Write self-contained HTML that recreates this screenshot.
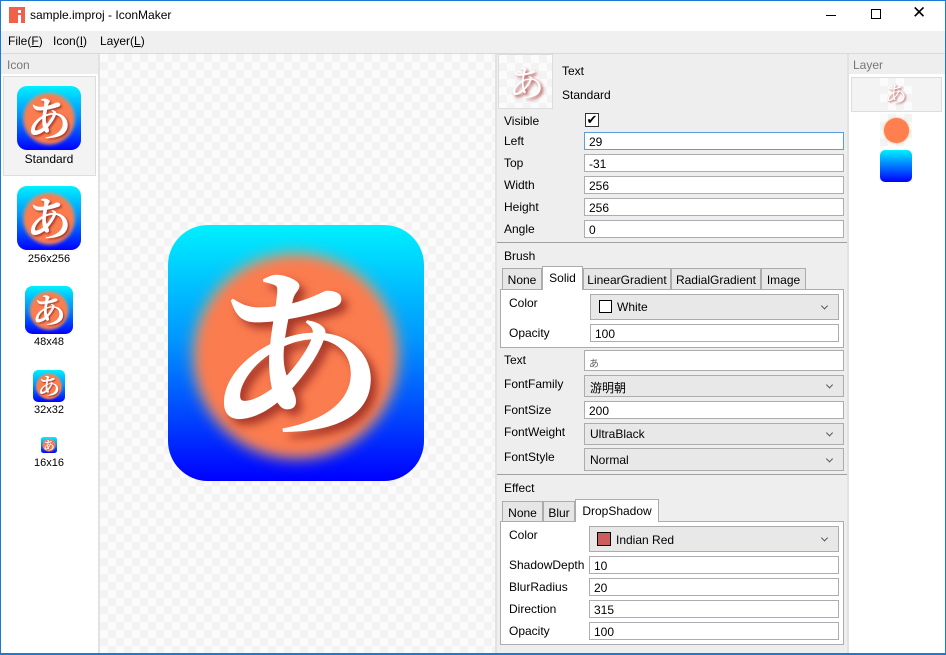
<!DOCTYPE html>
<html><head><meta charset="utf-8"><style>
*{box-sizing:border-box;margin:0;padding:0}
body{width:946px;height:655px;overflow:hidden;background:#f0f0f0;font-family:"Liberation Sans","Noto Sans CJK JP",sans-serif;font-size:12px;color:#000;position:relative}
.a{position:absolute}
.win{left:0;top:0;width:946px;height:655px;border:1px solid #1a7ad4;pointer-events:none;z-index:10}
.inp{position:absolute;background:#fff;border:1px solid #abadb3;padding:2px 0 0 4px;font-size:12px;height:18px}
.cb{position:absolute;background:#e8e8e8;border:1px solid #acacac;padding:3px 0 0 5px;font-size:12px}
.cb:after{content:"";position:absolute;right:11px;top:50%;width:4px;height:4px;border-right:1px solid #555;border-bottom:1px solid #555;transform:translateY(-70%) rotate(45deg)}
.lbl{position:absolute;font-size:12px}
.tab{position:absolute;background:#e6e6e6;border:1px solid #acacac;font-size:12px;text-align:center;padding-top:4px}
.tab.sel{background:#fff;border-bottom:none;z-index:2}
.chk{background-image:linear-gradient(45deg,#f3f3f3 25%,transparent 25%,transparent 75%,#f3f3f3 75%),linear-gradient(45deg,#f3f3f3 25%,transparent 25%,transparent 75%,#f3f3f3 75%);background-size:16px 16px;background-position:0 0,8px 8px;background-color:#fbfbfb}
.ic{position:absolute;width:256px;height:256px;transform-origin:0 0;border-radius:40px;background:linear-gradient(#00f0ff,#0096ff 45%,#0000ff);overflow:hidden}
.ic .c{position:absolute;left:30px;top:33px;width:196px;height:196px;border-radius:50%;background:#fb7c4f;box-shadow:0 0 10px 6px rgba(240,150,90,.8);filter:blur(5px)}
.ic .t{position:absolute;left:0;top:-8px;width:256px;text-align:center;font-family:"Noto Serif CJK JP","Noto Serif CJK SC",serif;font-weight:700;font-size:182px;line-height:256px;color:#fff;text-shadow:6px 6px 9px #a8382a}
</style></head><body>
<div class="a win"></div>
<div class="a" style="left:0;top:0;width:946px;height:31px;background:#fff"></div>
<div class="a" style="left:9px;top:7px;width:16px;height:16px;background:#f0604a"></div>
<div class="a" style="left:18px;top:10px;width:3px;height:3px;background:#fff"></div>
<div class="a" style="left:18px;top:15px;width:3px;height:8px;background:#fff"></div>
<div class="a" style="left:30px;top:8px;font-size:12px">sample.improj - IconMaker</div>
<div class="a" style="left:826px;top:15px;width:10px;height:1px;background:#000"></div>
<div class="a" style="left:871px;top:9px;width:10px;height:10px;border:1px solid #000"></div>
<div class="a" style="left:912px;top:3px;font-size:17px;line-height:20px">✕</div>
<div class="a" style="left:8px;top:34px">File(<u>F</u>)</div>
<div class="a" style="left:53px;top:34px">Icon(<u>I</u>)</div>
<div class="a" style="left:100px;top:34px">Layer(<u>L</u>)</div>
<div class="a" style="left:0;top:53px;width:946px;height:1px;background:#d9d9d9"></div>
<div class="a" style="left:1px;top:54px;width:97px;height:600px;background:#fff"></div>
<div class="a" style="left:1px;top:54px;width:97px;height:20px;background:#eeeeee;color:#777;padding:4px 0 0 6px">Icon</div>
<div class="a" style="left:98px;top:54px;width:2px;height:600px;background:#e2e2e2"></div>
<div class="a" style="left:3px;top:76px;width:93px;height:100px;background:#f3f3f3;border:1px solid #ddd"></div>
<div class="ic" style="left:17px;top:86px;transform:scale(.25)"><div class="c"></div><div class="t">あ</div></div>
<div class="a" style="left:0;top:152px;width:98px;text-align:center">Standard</div>
<div class="ic" style="left:17px;top:186px;transform:scale(.25)"><div class="c"></div><div class="t">あ</div></div>
<div class="a" style="left:0;top:253px;width:98px;text-align:center;font-size:11px">256x256</div>
<div class="ic" style="left:25px;top:286px;transform:scale(.1875)"><div class="c"></div><div class="t">あ</div></div>
<div class="a" style="left:0;top:336px;width:98px;text-align:center;font-size:11px">48x48</div>
<div class="ic" style="left:33px;top:370px;transform:scale(.125)"><div class="c"></div><div class="t">あ</div></div>
<div class="a" style="left:0;top:404px;width:98px;text-align:center;font-size:11px">32x32</div>
<div class="ic" style="left:41px;top:437px;transform:scale(.0625)"><div class="c"></div><div class="t">あ</div></div>
<div class="a" style="left:0;top:457px;width:98px;text-align:center;font-size:11px">16x16</div>
<div class="a chk" style="left:100px;top:54px;width:395px;height:600px"></div>
<div class="ic" style="left:168px;top:225px"><div class="c"></div><div class="t">あ</div></div>
<div class="a" style="left:495px;top:54px;width:2px;height:600px;background:#e2e2e2"></div>
<div class="a" style="left:497px;top:54px;width:350px;height:600px;background:#eeeeee"></div>
<div class="a chk" style="left:498px;top:54px;width:55px;height:55px;border:1px solid #ddd;overflow:hidden"><div style="position:absolute;left:0;top:2px;width:55px;text-align:center;font-family:'Noto Serif CJK JP',serif;font-size:36px;line-height:50px;color:#fff;text-shadow:2px 2px 3px #b04040">あ</div></div>
<div class="lbl" style="left:562px;top:64px">Text</div>
<div class="lbl" style="left:562px;top:88px">Standard</div>
<div class="lbl" style="left:504px;top:114px">Visible</div>
<div class="a" style="left:585px;top:113px;width:14px;height:14px;border:1px solid #333;background:#fff;font-size:13px;line-height:12px;text-align:center">✔</div>
<div class="lbl" style="left:504px;top:134px">Left</div>
<div class="inp" style="left:584px;top:132px;width:260px;border-color:#5a9ee0">29</div>
<div class="lbl" style="left:504px;top:156px">Top</div>
<div class="inp" style="left:584px;top:154px;width:260px">-31</div>
<div class="lbl" style="left:504px;top:178px">Width</div>
<div class="inp" style="left:584px;top:176px;width:260px">256</div>
<div class="lbl" style="left:504px;top:200px">Height</div>
<div class="inp" style="left:584px;top:198px;width:260px">256</div>
<div class="lbl" style="left:504px;top:222px">Angle</div>
<div class="inp" style="left:584px;top:220px;width:260px">0</div>
<div class="a" style="left:497px;top:242px;width:350px;height:1px;background:#a0a0a0"></div>
<div class="lbl" style="left:504px;top:249px">Brush</div>
<div class="tab" style="left:502px;top:268px;width:40px;height:22px">None</div>
<div class="tab sel" style="left:542px;top:266px;width:41px;height:24px">Solid</div>
<div class="tab" style="left:583px;top:268px;width:88px;height:22px">LinearGradient</div>
<div class="tab" style="left:671px;top:268px;width:90px;height:22px">RadialGradient</div>
<div class="tab" style="left:761px;top:268px;width:45px;height:22px">Image</div>
<div class="a" style="left:500px;top:289px;width:344px;height:59px;background:#fff;border:1px solid #acacac"></div>
<div class="lbl" style="left:509px;top:296px">Color</div>
<div class="cb" style="left:590px;top:294px;width:249px;height:26px;padding:5px 0 0 8px"><span style="display:inline-block;width:13px;height:13px;border:1px solid #000;background:#fff;vertical-align:-2px;margin-right:5px"></span>White</div>
<div class="lbl" style="left:509px;top:326px">Opacity</div>
<div class="inp" style="left:590px;top:324px;width:249px">100</div>
<div class="lbl" style="left:504px;top:353px">Text</div>
<div class="inp" style="left:584px;top:350px;width:260px;height:21px;color:#666;font-size:10px;padding-top:4px">あ</div>
<div class="lbl" style="left:504px;top:377px">FontFamily</div>
<div class="cb" style="left:584px;top:375px;width:260px;height:22px">游明朝</div>
<div class="lbl" style="left:504px;top:403px">FontSize</div>
<div class="inp" style="left:584px;top:401px;width:260px">200</div>
<div class="lbl" style="left:504px;top:425px">FontWeight</div>
<div class="cb" style="left:584px;top:423px;width:260px;height:22px">UltraBlack</div>
<div class="lbl" style="left:504px;top:450px">FontStyle</div>
<div class="cb" style="left:584px;top:448px;width:260px;height:23px;padding-top:4px">Normal</div>
<div class="a" style="left:497px;top:474px;width:350px;height:1px;background:#a0a0a0"></div>
<div class="lbl" style="left:504px;top:481px">Effect</div>
<div class="tab" style="left:502px;top:501px;width:41px;height:21px">None</div>
<div class="tab" style="left:543px;top:501px;width:32px;height:21px">Blur</div>
<div class="tab sel" style="left:575px;top:499px;width:84px;height:23px;padding-top:4px">DropShadow</div>
<div class="a" style="left:500px;top:521px;width:344px;height:124px;background:#fff;border:1px solid #acacac"></div>
<div class="lbl" style="left:509px;top:528px">Color</div>
<div class="cb" style="left:589px;top:526px;width:250px;height:26px;padding:5px 0 0 7px"><span style="display:inline-block;width:14px;height:14px;border:1px solid #000;background:#cd5c5c;vertical-align:-2px;margin-right:5px"></span>Indian Red</div>
<div class="lbl" style="left:509px;top:558px">ShadowDepth</div>
<div class="inp" style="left:589px;top:556px;width:250px">10</div>
<div class="lbl" style="left:509px;top:580px">BlurRadius</div>
<div class="inp" style="left:589px;top:578px;width:250px">20</div>
<div class="lbl" style="left:509px;top:602px">Direction</div>
<div class="inp" style="left:589px;top:600px;width:250px">315</div>
<div class="lbl" style="left:509px;top:624px">Opacity</div>
<div class="inp" style="left:589px;top:622px;width:250px">100</div>
<div class="a" style="left:847px;top:54px;width:2px;height:600px;background:#e2e2e2"></div>
<div class="a" style="left:849px;top:54px;width:96px;height:600px;background:#fff"></div>
<div class="a" style="left:849px;top:54px;width:96px;height:20px;background:#eeeeee;color:#777;padding:4px 0 0 4px">Layer</div>
<div class="a" style="left:851px;top:77px;width:91px;height:35px;background:#f3f3f3;border:1px solid #ddd"></div>
<div class="a chk" style="left:880px;top:78px;width:32px;height:32px;text-align:center;font-family:'Noto Serif CJK JP',serif;font-size:22px;line-height:32px;color:#fff;text-shadow:1px 1px 2px #b04040">あ</div>
<div class="a chk" style="left:880px;top:114px;width:32px;height:32px"></div>
<div class="a" style="left:884px;top:118px;width:25px;height:25px;border-radius:50%;background:#ff7f50;box-shadow:0 0 2px #f0a040"></div>
<div class="a" style="left:880px;top:150px;width:32px;height:32px;border-radius:5px;background:linear-gradient(#00f0ff,#0000ff)"></div>
<div class="a" style="left:0;top:653px;width:946px;height:2px;background:#1a7ad4"></div>
</body></html>
